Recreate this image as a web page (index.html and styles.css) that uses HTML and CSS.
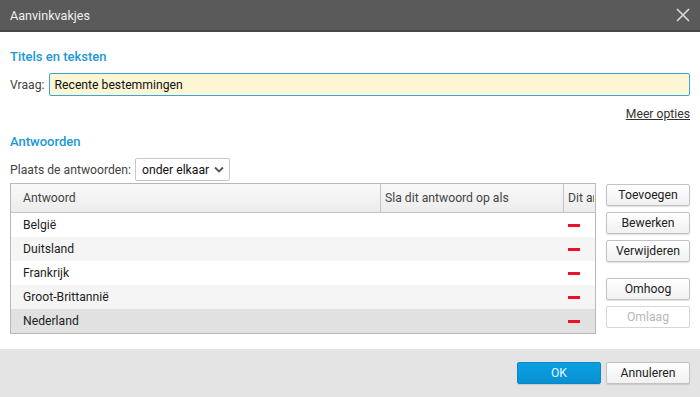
FILE: index.html
```html
<!DOCTYPE html>
<html lang="nl">
<head>
    <meta charset="UTF-8">
    <title>Aanvinkvakjes</title>
    <link rel="stylesheet" href="styles.css">
</head>
<body>
    <div class="dialog">
        <div class="titlebar">
            <span class="title">Aanvinkvakjes</span>
            <svg class="close" width="14" height="14" viewBox="0 0 14 14">
                <path d="M1 1 L13 13 M13 1 L1 13" stroke="#dcdcdc" stroke-width="1.6" fill="none"/>
            </svg>
        </div>

        <div class="content">
            <h2>Titels en teksten</h2>
            <div class="field">
                <label for="vraag">Vraag:</label>
                <input type="text" id="vraag" value="Recente bestemmingen">
            </div>
            <div class="more"><a href="#">Meer opties</a></div>

            <h2>Antwoorden</h2>
            <div class="field">
                <label>Plaats de antwoorden:</label>
                <div class="select">
                    onder elkaar
                    <svg width="10" height="7" viewBox="0 0 10 7">
                        <path d="M1 1.5 L5 5.5 L9 1.5" stroke="#555" stroke-width="1.8" fill="none"/>
                    </svg>
                </div>
            </div>

            <div class="answers">
                <div class="table">
                    <div class="row head">
                        <div class="cell c1">Antwoord</div>
                        <div class="cell c2">Sla dit antwoord op als</div>
                        <div class="cell c3"><span class="clip">Dit an</span></div>
                    </div>
                    <div class="row">
                        <div class="cell c1">België</div>
                        <div class="cell c2"></div>
                        <div class="cell c3"><span class="dash"></span></div>
                    </div>
                    <div class="row alt">
                        <div class="cell c1">Duitsland</div>
                        <div class="cell c2"></div>
                        <div class="cell c3"><span class="dash"></span></div>
                    </div>
                    <div class="row">
                        <div class="cell c1">Frankrijk</div>
                        <div class="cell c2"></div>
                        <div class="cell c3"><span class="dash"></span></div>
                    </div>
                    <div class="row alt">
                        <div class="cell c1">Groot-Brittannië</div>
                        <div class="cell c2"></div>
                        <div class="cell c3"><span class="dash"></span></div>
                    </div>
                    <div class="row selected">
                        <div class="cell c1">Nederland</div>
                        <div class="cell c2"></div>
                        <div class="cell c3"><span class="dash"></span></div>
                    </div>
                </div>

                <div class="actions">
                    <button class="btn">Toevoegen</button>
                    <button class="btn">Bewerken</button>
                    <button class="btn">Verwijderen</button>
                    <button class="btn spaced">Omhoog</button>
                    <button class="btn" disabled>Omlaag</button>
                </div>
            </div>
        </div>

        <div class="footer">
            <button class="btn primary">OK</button>
            <button class="btn">Annuleren</button>
        </div>
    </div>
</body>
</html>
```

FILE: styles.css
```css
body {
    margin: 0;
    font-family: Roboto, "Liberation Sans", sans-serif;
    font-size: 12.2px;
    color: #1e1e1e;
    background-color: #fff;
}
.dialog {
    width: 700px;
    height: 397px;
    display: flex;
    flex-direction: column;
}
.titlebar {
    height: 30px;
    background-color: #5a5a5a;
    border-bottom: 2px solid #474747;
    display: flex;
    align-items: center;
    justify-content: space-between;
    padding: 0 10px;
    flex-shrink: 0;
}
.title {
    color: #f0f0f0;
    font-size: 12.6px;
}
.content {
    flex: 1;
    padding: 17px 10px 0;
}
h2 {
    margin: 0;
    font-size: 13px;
    font-weight: 500;
    color: #1a98d9;
    line-height: 16px;
}
.field {
    display: flex;
    align-items: center;
    margin-top: 8px;
}
label {
    color: #444;
    margin-right: 4px;
}
input[type="text"] {
    flex: 1;
    height: 23px;
    box-sizing: border-box;
    margin: 0;
    padding: 0 5px;
    border: 1px solid #3ca4dc;
    border-radius: 2px;
    background-color: #fcf6d5;
    font-family: inherit;
    font-size: 12.2px;
    color: #111;
}
.more {
    text-align: right;
    margin-top: 10px;
    margin-bottom: 12px;
    line-height: 16px;
}
.more a {
    color: #333;
    text-decoration: underline;
}
.select {
    display: flex;
    align-items: center;
    gap: 5px;
    height: 23px;
    box-sizing: border-box;
    padding: 0 5px 0 6px;
    border: 1px solid #c8c8c8;
    border-radius: 2px;
    color: #111;
}
.answers {
    display: flex;
    align-items: flex-start;
    gap: 10px;
    margin-top: 2px;
}
.table {
    width: 586px;
    box-sizing: border-box;
    border: 1px solid #b8b8b8;
    overflow: hidden;
}
.row {
    display: flex;
    height: 24px;
    align-items: center;
    white-space: nowrap;
}
.row.alt {
    background-color: #f5f5f5;
}
.row.selected {
    background-color: #e1e1e1;
}
.row.head {
    height: 28px;
    background: linear-gradient(#f9f9f9, #ececec);
    border-bottom: 1px solid #c4c4c4;
    color: #444;
}
.cell {
    box-sizing: border-box;
    height: 100%;
    display: flex;
    align-items: center;
    overflow: hidden;
}
.c1 {
    width: 369px;
    padding-left: 12px;
}
.c2 {
    width: 183px;
    padding-left: 4px;
}
.c3 {
    flex: 1;
    padding-left: 4px;
}
.clip {
    display: block;
    width: 26px;
    overflow: hidden;
}
.head .c2, .head .c3 {
    border-left: 1px solid #c4c4c4;
}
.dash {
    display: block;
    width: 12px;
    height: 3px;
    margin-left: 1px;
    background-color: #e8132a;
}
.actions {
    display: flex;
    flex-direction: column;
    gap: 6px;
    padding-top: 1px;
}
.btn {
    width: 84px;
    height: 22px;
    box-sizing: border-box;
    padding: 0;
    border: 1px solid #c2c2c2;
    border-radius: 2px;
    background: linear-gradient(#ffffff, #f1f1f1);
    box-shadow: 0 1px 1px rgba(0, 0, 0, 0.12);
    font-family: inherit;
    font-size: 12.2px;
    color: #222;
}
.btn.spaced {
    margin-top: 10px;
}
.btn:disabled {
    color: #b8b8b8;
    border-color: #d6d6d6;
    background: #fff;
    box-shadow: none;
}
.footer {
    height: 48px;
    flex-shrink: 0;
    background-color: #e4e4e4;
    display: flex;
    align-items: center;
    justify-content: flex-end;
    gap: 5px;
    padding: 0 10px;
}
.btn.primary {
    background: linear-gradient(#0aa0e2, #0890d2);
    border-color: #0a88c6;
    color: #eaf6fc;
}
```
